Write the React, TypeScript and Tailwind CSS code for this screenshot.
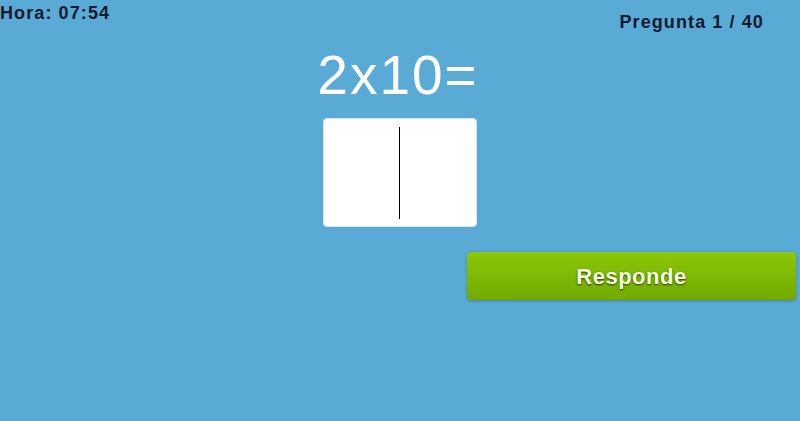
export default function App() {
  return (
    <div className="w-[800px] h-[421px] bg-[#5aaad6] font-['Liberation_Sans',Arial,sans-serif] overflow-hidden">
      {/* Top bar */}
      <div className="flex justify-between items-start h-[10px]">
        <div className="mt-[4px] text-[18px] leading-[19px] font-bold text-[#111a2e] tracking-[1.1px]">Hora: 07:54</div>
        <div className="mt-[13px] mr-[36px] text-[18px] leading-[19px] font-bold text-[#111a2e] tracking-[1.1px]">Pregunta 1 / 40</div>
      </div>

      {/* Question */}
      <div className="flex flex-col items-center">
        <div className="mt-[38px] ml-[-4px] text-[55px] leading-[55px] text-white tracking-[2px]">2x10=</div>
        <div className="mt-[15px] ml-[-1px] w-[154px] h-[109px] bg-white rounded-[4px] border border-[#d8e6ef] flex justify-center items-center">
          <div className="w-px h-[92px] bg-black"></div>
        </div>
      </div>

      {/* Answer button */}
      <div className="flex justify-end mt-[25px] pr-[4px]">
        <button className="w-[329px] h-[48px] rounded-[4px] bg-gradient-to-b from-[#8cc809] to-[#71a902] shadow-[0_1px_3px_rgba(0,0,0,0.25)] text-[#f4ffe0] text-[22px] font-bold tracking-[0.5px] [text-shadow:0_1px_2px_rgba(30,45,0,0.9)]">
          Responde
        </button>
      </div>
    </div>
  );
}
